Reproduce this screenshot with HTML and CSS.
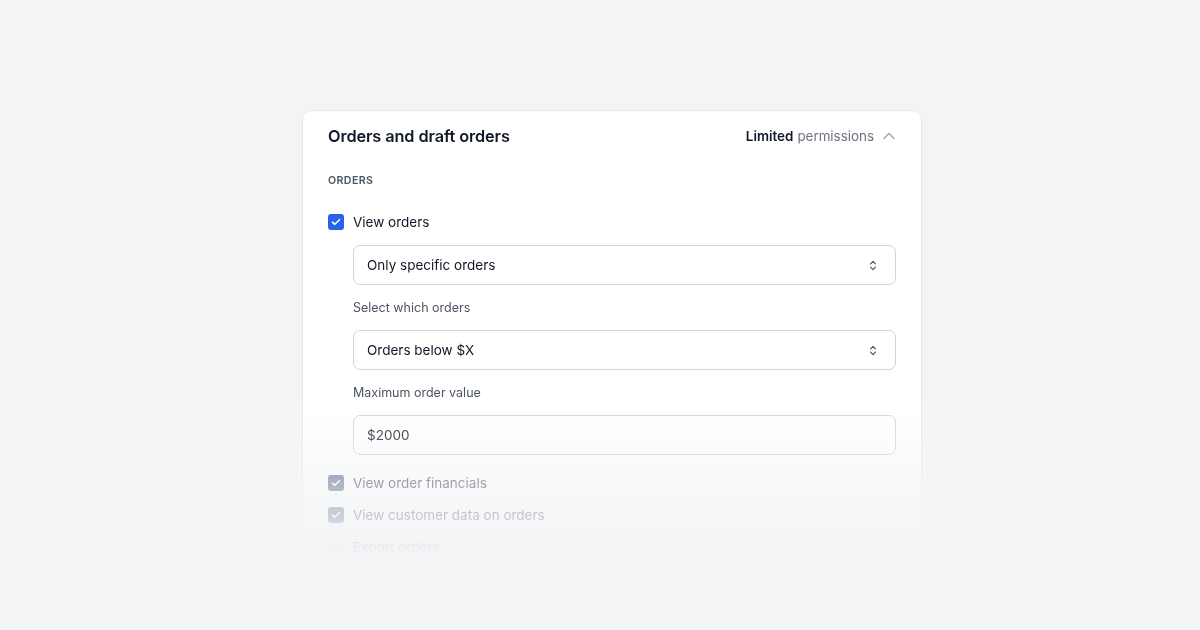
FILE: index.html
```html
<!DOCTYPE html>
<html>
<head>
<meta charset="utf-8">
<link rel="stylesheet" href="styles.css">
</head>
<body>
<div class="stage">
  <section class="card">
    <header class="card-head">
      <h2 class="title">Orders and draft orders</h2>
      <div class="perm">
        <span class="perm-strong">Limited</span> <span class="perm-muted">permissions</span>
        <svg class="chev" width="12" height="8" viewBox="0 0 12 8"><path d="M1 6.5 6 1.5l5 5" fill="none" stroke="#9ca3af" stroke-width="1.4" stroke-linecap="round" stroke-linejoin="round"/></svg>
      </div>
    </header>
    <div class="card-body">
      <div class="section-label">ORDERS</div>
      <label class="check-row">
        <span class="box box-on"><svg width="10" height="8" viewBox="0 0 10 8"><path d="M1.5 4.2 3.8 6.3 8.5 1.7" fill="none" stroke="#fff" stroke-width="1.6" stroke-linecap="round" stroke-linejoin="round"/></svg></span>
        <span class="check-text">View orders</span>
      </label>
      <div class="sub">
        <div class="select">
          <span>Only specific orders</span>
          <svg class="updown" width="8" height="11" viewBox="0 0 8 11"><path d="M1.5 3.8 4 1.3l2.5 2.5M1.5 7.2 4 9.7l2.5-2.5" fill="none" stroke="#4b5563" stroke-width="1.2" stroke-linecap="round" stroke-linejoin="round"/></svg>
        </div>
        <div class="field-label">Select which orders</div>
        <div class="select">
          <span>Orders below $X</span>
          <svg class="updown" width="8" height="11" viewBox="0 0 8 11"><path d="M1.5 3.8 4 1.3l2.5 2.5M1.5 7.2 4 9.7l2.5-2.5" fill="none" stroke="#4b5563" stroke-width="1.2" stroke-linecap="round" stroke-linejoin="round"/></svg>
        </div>
        <div class="field-label">Maximum order value</div>
        <div class="input">$2000</div>
      </div>
      <label class="check-row dim first-dim">
        <span class="box box-dis"><svg width="10" height="8" viewBox="0 0 10 8"><path d="M1.5 4.2 3.8 6.3 8.5 1.7" fill="none" stroke="#fff" stroke-width="1.6" stroke-linecap="round" stroke-linejoin="round"/></svg></span>
        <span class="check-text">View order financials</span>
      </label>
      <label class="check-row dim">
        <span class="box box-dis"><svg width="10" height="8" viewBox="0 0 10 8"><path d="M1.5 4.2 3.8 6.3 8.5 1.7" fill="none" stroke="#fff" stroke-width="1.6" stroke-linecap="round" stroke-linejoin="round"/></svg></span>
        <span class="check-text">View customer data on orders</span>
      </label>
      <label class="check-row dim">
        <span class="box box-off"></span>
        <span class="check-text">Export orders</span>
      </label>
    </div>
  </section>
</div>
</body>
</html>
```
FILE: styles.css
```css
* { box-sizing: border-box; }
html, body { margin: 0; padding: 0; }
body {
  background: #f3f4f6;
  font-family: "Inter", "Liberation Sans", sans-serif;
  color: #111827;
  width: 1200px;
  height: 630px;
  overflow: hidden;
}
.stage {
  padding: 110px 0 0 302px;
}
.card {
  width: 620px;
  background: #fff;
  border: 1px solid #e5e7eb;
  border-radius: 10px;
  box-shadow: 0 1px 3px rgba(17, 24, 39, 0.05);
  -webkit-mask-image: linear-gradient(to bottom, #000 290px, transparent 445px);
  mask-image: linear-gradient(to bottom, #000 290px, transparent 445px);
}
.card-head {
  height: 50px;
  padding: 0 26px 0 25px;
  display: flex;
  align-items: center;
  justify-content: space-between;
}
.title {
  margin: 0;
  font-size: 16.3px;
  font-weight: 600;
  letter-spacing: -0.1px;
  color: #111827;
}
.perm {
  display: flex;
  align-items: center;
  font-size: 13.4px;
}
.perm-strong { font-weight: 600; color: #111827; }
.perm-muted { color: #6b7280; margin-left: 4px; }
.chev { margin-left: 9px; }
.card-body {
  padding: 12px 25px 30px 25px;
}
.section-label {
  font-size: 10.6px;
  font-weight: 600;
  line-height: 16px;
  letter-spacing: 0.4px;
  color: #4b5563;
}
.check-row {
  display: flex;
  align-items: center;
  height: 22px;
  margin-top: 22px;
  font-size: 13.5px;
}
.box {
  width: 16px;
  height: 16px;
  border-radius: 3px;
  display: flex;
  align-items: center;
  justify-content: center;
  flex: none;
}
.box-on { background: #2563eb; }
.box-dis { background: #5b6b8c; }
.box-off { border: 1px solid #d1d5db; background: #fff; }
.check-text { margin-left: 9px; color: #111827; }
.dim .check-text { color: #374151; }
.first-dim { margin-top: 17px; }
.dim + .dim { margin-top: 10px; }
.sub {
  padding-left: 25px;
  padding-top: 12px;
}
.select, .input {
  height: 40px;
  border: 1px solid #d1d5db;
  border-radius: 7px;
  display: flex;
  align-items: center;
  justify-content: space-between;
  padding: 0 18px 0 13px;
  font-size: 13.5px;
  color: #111827;
}
.input { background: #fff; }
.updown { display: block; }
.field-label {
  font-size: 12.5px;
  line-height: 20px;
  color: #4b5563;
  margin: 13px 0 12px;
}
```
